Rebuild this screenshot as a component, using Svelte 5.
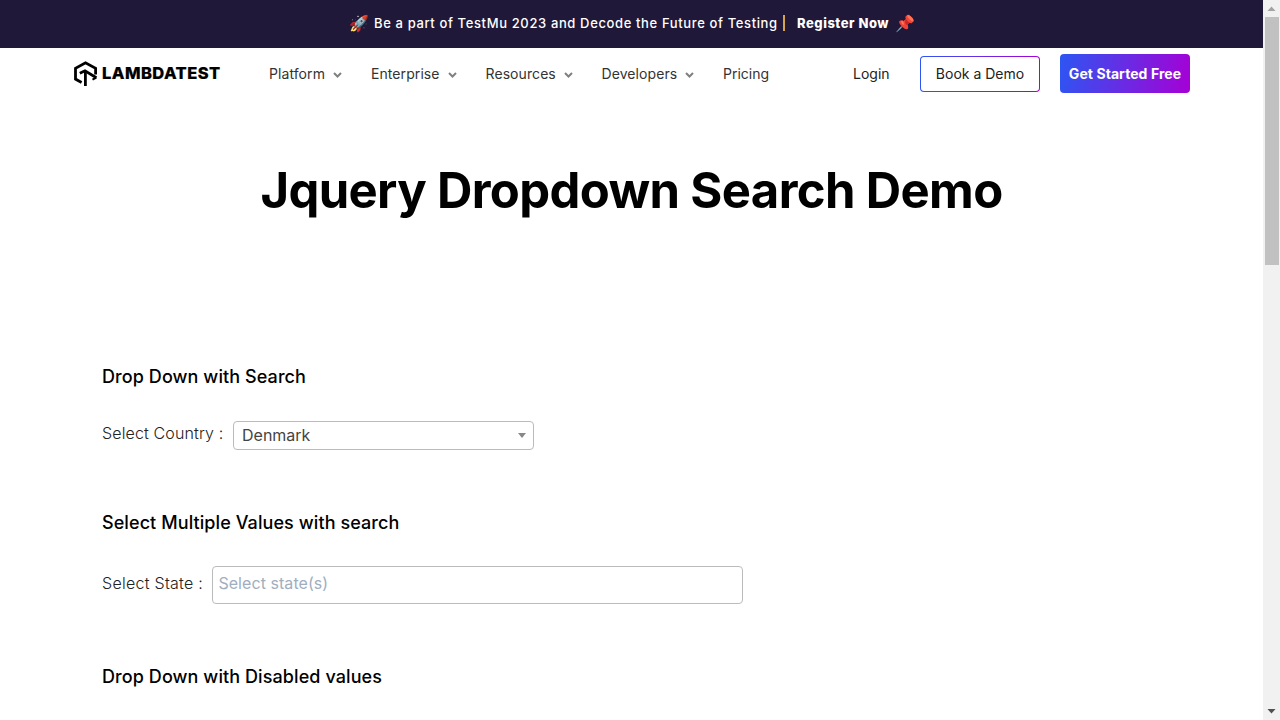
<script>
  const menus = [
    { label: 'Platform', width: 102 },
    { label: 'Enterprise', width: 114.5 },
    { label: 'Resources', width: 116 },
    { label: 'Developers', width: 121.5 }
  ];
</script>

<div class="window">
  <div class="page">
    <a class="banner" href="#register">
      <span class="emoji rocket">🚀</span>
      <span class="message">Be a part of TestMu 2023 and Decode the Future of Testing</span>
      <i class="divider"></i>
      <b>Register Now</b>
      <span class="emoji">📌</span>
    </a>

    <header>
      <a class="logo" href="#home" aria-label="LambdaTest">
        <svg class="mark" viewBox="0 0 24 26" fill="none" stroke="#000">
          <path d="M7.6 21.4 1.5 18.1V7.3L11.5 1.8 21.6 7.3V13.4" stroke-width="2.8" />
          <path d="M5.8 12.3 11 9.8 22.4 16.8" stroke-width="2.8" />
          <path d="M11.4 10.5V25" stroke-width="2.8" />
          <path d="M22.3 16.6 18.5 18.6" stroke-width="2.2" />
        </svg>
        <span>LAMBDATEST</span>
      </a>
      <nav>
        {#each menus as menu}
          <a href="#menu" style:width="{menu.width}px">
            <span>{menu.label}</span>
            <svg width="9" height="6" viewBox="0 0 9 6"><path d="M1 1 4.5 4.5 8 1" fill="none" stroke="#808080" stroke-width="2" /></svg>
          </a>
        {/each}
        <a href="#pricing">Pricing</a>
      </nav>
      <div class="actions">
        <a class="login" href="#login">Login</a>
        <a class="demo" href="#demo">Book a Demo</a>
        <a class="start" href="#start">Get Started Free</a>
      </div>
    </header>

    <h1>Jquery Dropdown Search Demo</h1>

    <main>
      <section class="country">
        <h2>Drop Down with Search</h2>
        <div class="field">
          <span class="label">Select Country :</span>
          <div class="select"><span>Denmark</span><i></i></div>
        </div>
      </section>
      <section class="state">
        <h2>Select Multiple Values with search</h2>
        <div class="field">
          <span class="label">Select State :</span>
          <div class="multi">Select state(s)</div>
        </div>
      </section>
      <section>
        <h2>Drop Down with Disabled values</h2>
      </section>
    </main>
  </div>
  <div class="scrollbar">
    <svg width="17" height="17"><path d="M4.5 11 8.5 6.5 12.5 11Z" fill="#a3a3a3" /></svg>
    <div class="thumb"></div>
    <svg class="down" width="17" height="17"><path d="M4.5 6 8.5 10.5 12.5 6Z" fill="#505050" /></svg>
  </div>
</div>

<style>
  :global(body) { margin: 0; overflow: hidden; background: #fff; }
  .window { display: flex; width: 1280px; height: 720px; overflow: hidden; font-family: Inter, sans-serif; color: #333; }
  .page { width: 1263px; height: 720px; overflow: hidden; }
  a { color: inherit; text-decoration: none; }
  .banner { box-sizing: border-box; display: flex; align-items: center; height: 48px; padding: 0 0 2px 349px; background: #1f1839; color: #fff; font-size: 13px; letter-spacing: 0.8px; white-space: nowrap; }
  .emoji { width: 20px; font-family: "Noto Color Emoji", sans-serif; font-size: 16px; letter-spacing: 0; }
  .rocket { margin-right: 5px; }
  .message { width: 408.5px; font-weight: 450; letter-spacing: 0.63px; }
  .divider { width: 2px; height: 16px; background: #d9a34c; margin-right: 12.5px; }
  .banner b { width: 98px; font-weight: 800; letter-spacing: 0.53px; }
  header { display: flex; align-items: center; height: 51px; padding-bottom: 1px; font-size: 14px; white-space: nowrap; }
  .logo { display: flex; align-items: center; width: 195px; padding-left: 74px; color: #000; font-size: 16.5px; line-height: 26px; }
  .mark { width: 24px; height: 26px; margin-right: 4px; }
  .logo span { padding-bottom: 2px; font-weight: 800; letter-spacing: 0.44px; -webkit-text-stroke: 0.2px #000; }
  nav { display: flex; flex: 1; padding-bottom: 1px; }
  nav a { display: flex; align-items: center; letter-spacing: 0.08px; }
  nav a:last-child { letter-spacing: 0; }
  nav svg { margin: 3px 0 0 8px; }
  .actions { display: flex; align-items: center; width: 410px; color: #222; }
  .login { width: 67px; padding-bottom: 1px; }
  .demo, .start { box-sizing: border-box; display: flex; align-items: center; justify-content: center; border-radius: 4px; }
  .demo { width: 120px; height: 36px; border: 1px solid transparent; background: linear-gradient(#fff, #fff) padding-box, linear-gradient(90deg, #2c56f2, #a600d5) border-box; margin-right: 20px; }
  .start { width: 130px; height: 39px; background: linear-gradient(100deg, #2c56f2, #a600d5); color: #fff; font-weight: 700; letter-spacing: 0.07px; }
  h1 { margin: 61px 0 0; height: 60px; font-size: 49px; line-height: 60px; font-weight: 700; letter-spacing: -0.64px; text-align: center; color: #000; }
  main { padding: 142px 0 0 102px; }
  h2 { margin: 0; font-size: 18px; line-height: 28px; font-weight: 500; letter-spacing: 0.085px; color: #000; }
  .country { height: 146px; }
  .state { height: 154px; }
  .field { display: flex; font-size: 16px; line-height: 26px; }
  .country .field { padding-top: 30px; }
  .state .field { padding-top: 29px; }
  .label { font-weight: 300; color: #222; letter-spacing: 0.13px; }
  .country .label { width: 131px; margin-top: -1px; }
  .state .label { width: 110.4px; padding-top: 4px; letter-spacing: 0.27px; }
  .select { box-sizing: border-box; display: flex; align-items: center; justify-content: space-between; width: 300.5px; height: 28.5px; padding: 0 7px 0 8px; border: 1px solid #bbb; border-radius: 4px; color: #444; }
  .select span { padding-bottom: 1px; }
  .select i { border: 4px solid transparent; border-top: 5px solid #888; border-bottom: 0; }
  .multi { box-sizing: border-box; width: 530.5px; height: 37.5px; padding: 3px 5px; border: 1px solid #bbb; border-radius: 4px; color: #a0aec0; letter-spacing: 0.06px; }
  .scrollbar { display: flex; flex-direction: column; width: 17px; height: 720px; background: #f1f1f1; }
  .scrollbar svg { display: block; }
  .thumb { height: 248px; margin: 0 1px 0 2px; background: #c1c1c1; }
  .down { margin-top: auto; }
</style>
